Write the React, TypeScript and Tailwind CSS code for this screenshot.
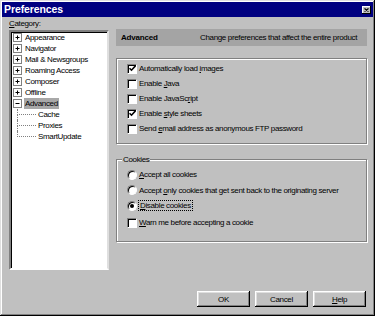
import { FC, ReactNode } from "react";

const Check: FC<{ on?: boolean }> = ({ on }) => (
  <span className="w-[10px] h-[10px] shrink-0 bg-white border border-t-[#808080] border-l-[#808080] border-b-white border-r-white shadow-[inset_1px_1px_0_#000] flex items-center justify-center">
    {on && (
      <svg width="7" height="7" viewBox="0 0 7 7">
        <path d="M0.5 3.2 L2.5 5.2 L6.5 0.8" stroke="#000" strokeWidth="1.6" fill="none" />
      </svg>
    )}
  </span>
);

const Radio: FC<{ on?: boolean }> = ({ on }) => (
  <span className="w-[10px] h-[10px] shrink-0 rounded-full bg-white border border-t-[#808080] border-l-[#808080] border-b-white border-r-white shadow-[inset_1px_1px_0_#000] flex items-center justify-center">
    {on && <span className="w-[4px] h-[4px] rounded-full bg-black" />}
  </span>
);

const Row: FC<{ children: ReactNode; h?: string }> = ({ children, h = "h-[15px]" }) => (
  <div className={`${h} flex items-center gap-[2px] pl-[10px] whitespace-nowrap`}>{children}</div>
);

const Plus: FC<{ open?: boolean }> = ({ open }) => (
  <span className="w-[9px] h-[9px] shrink-0 border border-[#808080] bg-white flex items-center justify-center">
    <svg width="7" height="7" viewBox="0 0 7 7">
      <path d="M1.5 3.5 H5.5" stroke="#000" strokeWidth="1" />
      {!open && <path d="M3.5 1.5 V5.5" stroke="#000" strokeWidth="1" />}
    </svg>
  </span>
);

const TreeItem: FC<{ label: string; open?: boolean; selected?: boolean }> = ({ label, open, selected }) => (
  <div className="h-[11px] flex items-center pl-[2px] gap-[3px] whitespace-nowrap">
    <Plus open={open} />
    <span className={selected ? "bg-[#a8a8a8] px-[1px] -ml-[1px]" : ""}>{label}</span>
  </div>
);

const TreeChild: FC<{ label: string; last?: boolean }> = ({ label, last }) => (
  <div className="h-[11px] flex items-stretch pl-[6px]">
    <div className="w-[19px] flex flex-col">
      <div className="h-[6px] border-l border-b border-dotted border-[#808080]" />
      <div className={last ? "flex-1" : "flex-1 border-l border-dotted border-[#808080]"} />
    </div>
    <span className="ml-[2px] leading-[11px]">{label}</span>
  </div>
);

const Btn: FC<{ children: ReactNode }> = ({ children }) => (
  <button className="w-[53px] h-[16px] bg-[#c0c0c0] shadow-[inset_-1px_-1px_0_#000,inset_1px_1px_0_#fff,inset_-2px_-2px_0_#808080,inset_2px_2px_0_#dfdfdf] flex items-center justify-center">
    {children}
  </button>
);

export default function App() {
  return (
    <div className="w-[375px] h-[316px] bg-[#c0c0c0] p-[2px] shadow-[inset_-1px_-1px_0_#000,inset_1px_1px_0_#dfdfdf,inset_-2px_-2px_0_#808080,inset_2px_2px_0_#fff] font-['Liberation_Sans',Arial,sans-serif] text-[8px] leading-[11px] tracking-[-0.35px] text-black flex flex-col">
      {/* title bar */}
      <div className="h-[15px] bg-[#000080] flex items-center justify-between pl-[2px] pr-[2px]">
        <span className="text-white font-bold text-[10.5px] tracking-[-0.1px]">Preferences</span>
        <span className="w-[9px] h-[8px] bg-[#c0c0c0] shadow-[inset_-1px_-1px_0_#000,inset_1px_1px_0_#fff] flex items-center justify-center">
          <svg width="5" height="4" viewBox="0 0 5 4">
            <path d="M0.5 0.5 L4.5 3.5 M4.5 0.5 L0.5 3.5" stroke="#000" strokeWidth="1.2" />
          </svg>
        </span>
      </div>

      <div className="flex gap-[7px] pl-[7px]">
        {/* category tree */}
        <div className="w-[100px] flex flex-col pt-[1px]">
          <div className="h-[11px]">
            <u>C</u>ategory:
          </div>
          <div className="mt-[1px] h-[240px] bg-white border-2 border-t-[#808080] border-l-[#808080] border-b-white border-r-[#dfdfdf] shadow-[inset_1px_1px_0_#000]">
            <TreeItem label="Appearance" />
            <TreeItem label="Navigator" />
            <TreeItem label="Mail & Newsgroups" />
            <TreeItem label="Roaming Access" />
            <TreeItem label="Composer" />
            <TreeItem label="Offline" />
            <TreeItem label="Advanced" open selected />
            <TreeChild label="Cache" />
            <TreeChild label="Proxies" />
            <TreeChild label="SmartUpdate" last />
          </div>
        </div>

        {/* right side */}
        <div className="w-[251px] flex flex-col pt-[12px]">
          <div className="h-[17px] bg-[#a4a4a4] flex items-center pl-[5px] whitespace-nowrap">
            <span className="font-bold w-[79px] tracking-[-0.2px]">Advanced</span>
            <span>Change preferences that affect the entire product</span>
          </div>

          <div className="mt-[12px] h-[86px] border border-[#808080] shadow-[inset_1px_1px_0_#fff,1px_1px_0_#fff] pt-[2px]">
            <Row>
              <Check on />
              <span>
                Automatically load <u>i</u>mages
              </span>
            </Row>
            <Row>
              <Check />
              <span>
                Enable <u>J</u>ava
              </span>
            </Row>
            <Row>
              <Check />
              <span>
                Enable JavaSc<u>r</u>ipt
              </span>
            </Row>
            <Row>
              <Check on />
              <span>
                Enable <u>s</u>tyle sheets
              </span>
            </Row>
            <Row>
              <Check />
              <span>
                Send <u>e</u>mail address as anonymous FTP password
              </span>
            </Row>
          </div>

          <div className="relative mt-[15px] h-[83px] border border-[#808080] shadow-[inset_1px_1px_0_#fff,1px_1px_0_#fff] pt-[7px]">
            <span className="absolute -top-[6px] left-[5px] bg-[#c0c0c0] px-[1px]">Cookies</span>
            <Row h="h-[15px]">
              <Radio />
              <span>
                <u>A</u>ccept all cookies
              </span>
            </Row>
            <Row h="h-[16px]">
              <Radio />
              <span>
                Accept <u>o</u>nly cookies that get sent back to the originating server
              </span>
            </Row>
            <Row h="h-[15px]">
              <Radio on />
              <span className="border border-dotted border-black px-[1px] -ml-[1px] leading-[9px]">
                <u>D</u>isable cookies
              </span>
            </Row>
            <Row h="h-[19px]">
              <Check />
              <span>
                <u>W</u>arn me before accepting a cookie
              </span>
            </Row>
          </div>
        </div>
      </div>

      <div className="mt-[21px] flex justify-end gap-[5px] pr-[7px]">
        <Btn>OK</Btn>
        <Btn>Cancel</Btn>
        <Btn>
          <span>
            <u>H</u>elp
          </span>
        </Btn>
      </div>
    </div>
  );
}
